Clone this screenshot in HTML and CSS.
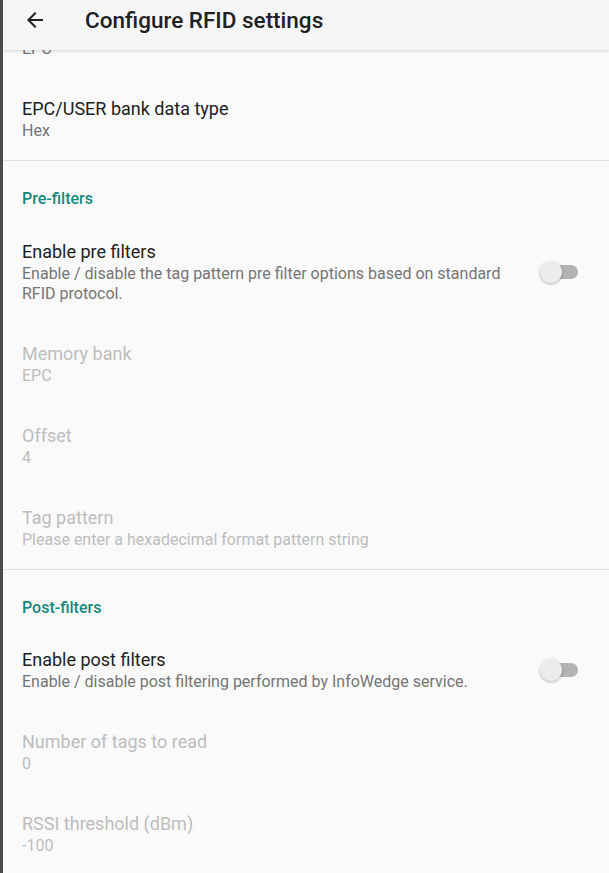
FILE: index.html
```html
<!DOCTYPE html>
<html lang="en">
<head>
    <meta charset="UTF-8">
    <meta name="viewport" content="width=device-width, initial-scale=1.0">
    <title>Configure RFID settings</title>
    <link rel="stylesheet" href="styles.css">
</head>
<body>
    <div class="screen">
        <div class="app-bar">
            <svg class="back" width="24" height="24" viewBox="0 0 24 24">
                <path d="M20 11H7.83l5.59-5.59L12 4l-8 8 8 8 1.41-1.41L7.83 13H20v-2z" fill="#212121"/>
            </svg>
            <span class="app-title">Configure RFID settings</span>
        </div>

        <div class="list">
            <!-- scrolled under the app bar, only the summary peeks out -->
            <div class="pref scrolled">
                <div class="pref-text">
                    <div class="pref-summary">EPC</div>
                </div>
            </div>
            <div class="pref">
                <div class="pref-text">
                    <div class="pref-title">EPC/USER bank data type</div>
                    <div class="pref-summary">Hex</div>
                </div>
            </div>

            <div class="category">Pre-filters</div>
            <div class="pref">
                <div class="pref-text">
                    <div class="pref-title">Enable pre filters</div>
                    <div class="pref-summary">Enable / disable the tag pattern pre filter options based on standard RFID protocol.</div>
                </div>
                <div class="switch"><span class="track"></span><span class="thumb"></span></div>
            </div>
            <div class="pref disabled">
                <div class="pref-text">
                    <div class="pref-title">Memory bank</div>
                    <div class="pref-summary">EPC</div>
                </div>
            </div>
            <div class="pref disabled">
                <div class="pref-text">
                    <div class="pref-title">Offset</div>
                    <div class="pref-summary">4</div>
                </div>
            </div>
            <div class="pref disabled">
                <div class="pref-text">
                    <div class="pref-title">Tag pattern</div>
                    <div class="pref-summary">Please enter a hexadecimal format pattern string</div>
                </div>
            </div>

            <div class="category">Post-filters</div>
            <div class="pref">
                <div class="pref-text">
                    <div class="pref-title">Enable post filters</div>
                    <div class="pref-summary">Enable / disable post filtering performed by InfoWedge service.</div>
                </div>
                <div class="switch"><span class="track"></span><span class="thumb"></span></div>
            </div>
            <div class="pref disabled">
                <div class="pref-text">
                    <div class="pref-title">Number of tags to read</div>
                    <div class="pref-summary">0</div>
                </div>
            </div>
            <div class="pref disabled">
                <div class="pref-text">
                    <div class="pref-title">RSSI threshold (dBm)</div>
                    <div class="pref-summary">-100</div>
                </div>
            </div>
        </div>
    </div>
</body>
</html>
```

FILE: styles.css
```css
body {
    margin: 0;
    font-family: Roboto, "Noto Sans", sans-serif;
    background: #fafafa;
    color: #212121;
}
.screen {
    position: relative;
    height: 873px;
    overflow: hidden;
    border-left: 3px solid #4a4a4a;
    box-sizing: border-box;
    background: #fafafa;
}
.app-bar {
    position: absolute;
    top: 0;
    left: 0;
    right: 0;
    height: 50px;
    display: flex;
    align-items: center;
    background: #f6f6f6;
    box-shadow: 0 1px 3px rgba(0, 0, 0, 0.16);
    z-index: 2;
}
.back {
    margin-left: 20px;
    margin-top: -11px;
}
.app-title {
    margin-left: 38px;
    margin-top: -11px;
    font-size: 22.5px;
    font-weight: 500;
    color: #212121;
}
.list {
    margin-top: -6px;
}
.pref {
    display: flex;
    align-items: center;
    padding: 19px 31px 19px 19px;
}
.pref.scrolled {
    padding-top: 44px;
}
.pref-text {
    flex: 1;
    padding-right: 30px;
}
.pref-title {
    font-size: 18px;
    line-height: 23px;
    color: #212121;
}
.pref-summary {
    margin-top: 1px;
    font-size: 16px;
    line-height: 20px;
    color: #757575;
}
.disabled .pref-title,
.disabled .pref-summary {
    color: #bdbdbd;
}
.category {
    border-top: 1px solid #e0e0e0;
    padding: 28px 19px 11.5px;
    font-size: 16px;
    line-height: 20px;
    font-weight: 500;
    color: #138a7c;
}
.switch {
    position: relative;
    width: 38px;
    height: 22px;
    flex-shrink: 0;
}
.track {
    position: absolute;
    left: 3px;
    right: 0;
    top: 4px;
    height: 14px;
    border-radius: 7px;
    background: #b3b3b3;
}
.thumb {
    position: absolute;
    left: 0;
    top: 0;
    width: 22px;
    height: 22px;
    border-radius: 50%;
    background: #ececec;
    box-shadow: 0 1px 3px rgba(0, 0, 0, 0.3);
}
```
